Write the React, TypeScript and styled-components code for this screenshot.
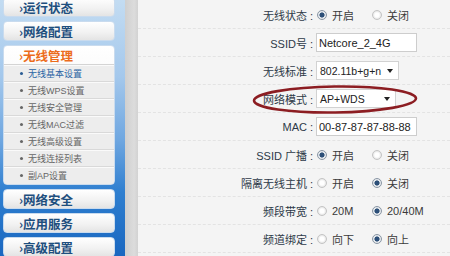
import styled, { createGlobalStyle } from "styled-components";

const GlobalStyle = createGlobalStyle`
  html, body {
    margin: 0;
    padding: 0;
  }
  body {
    width: 450px;
    height: 256px;
    overflow: hidden;
    background: #f4f4f4;
    font-family: "Liberation Sans", "Noto Sans CJK SC", sans-serif;
  }
`;

const Page = styled.div`
  display: flex;
  width: 450px;
  height: 256px;
  overflow: hidden;
`;

const Sidebar = styled.nav`
  width: 125px;
  flex-shrink: 0;
  overflow: hidden;
  background: linear-gradient(
    180deg,
    #c3dcf2 0%,
    #a4c8ec 30%,
    #6ea6e0 55%,
    #2f7fd0 75%,
    #1a67c0 100%
  );
`;

const Menu = styled.div`
  display: flex;
  flex-direction: column;
  gap: 4px;
  margin: -3px 10px 0 3px;
`;

const MenuBox = styled.div`
  border: 1px solid #c9dbee;
  border-radius: 4px;
  background: linear-gradient(180deg, #ffffff 0%, #f1f1f1 60%, #e4e4e4 100%);
  overflow: hidden;
`;

const MenuHead = styled.div<{ $active?: boolean }>`
  height: 18px;
  display: flex;
  align-items: center;
  padding-left: 15px;
  font-family: "Noto Sans CJK SC", sans-serif;
  font-size: 12.5px;
  line-height: 13px;
  font-weight: 700;
  color: ${({ $active }) => ($active ? "#ec6c1c" : "#1e4f7e")};
  border-bottom: ${({ $active }) => ($active ? "1px solid #d4d4d4" : "none")};
`;

const SubList = styled.ul`
  list-style: none;
  margin: 0;
  padding: 0;
  background: #ededed;
`;

const SubItem = styled.li<{ $current?: boolean }>`
  height: 17px;
  box-sizing: border-box;
  display: flex;
  align-items: center;
  gap: 5px;
  padding-left: 16px;
  font-family: "Liberation Sans", "Noto Sans CJK SC", sans-serif;
  font-size: 9px;
  color: ${({ $current }) => ($current ? "#2a64a4" : "#666")};
  border-bottom: 1px solid #d9d9d9;
  box-shadow: inset 0 1px 0 #fafafa;
  &:last-child {
    border-bottom: none;
  }
`;

const Bullet = styled.span<{ $current?: boolean }>`
  width: 3px;
  height: 3px;
  border-radius: 50%;
  background: ${({ $current }) => ($current ? "#2a5c94" : "#666")};
`;

const Divider = styled.div`
  width: 13px;
  flex-shrink: 0;
  background: linear-gradient(90deg, #cfcfcf, #dcdcdc 70%, #d2d2d2);
`;

const Content = styled.main`
  position: relative;
  flex: 1;
  padding-top: 1px;
  background: #f4f4f4;
`;

const Row = styled.div`
  display: grid;
  grid-template-columns: 178px 1fr;
  align-items: center;
  height: 28px;
  box-sizing: border-box;
  border-bottom: 1px dashed #e3e3e3;
`;

const Label = styled.div`
  text-align: right;
  white-space: nowrap;
  font-size: 11px;
  color: #2e3a48;
`;

const Colon = styled.span`
  padding: 0 3px 0 3px;
  font-family: "Liberation Sans", sans-serif;
`;

const Value = styled.div`
  display: flex;
  align-items: center;
  font-size: 11px;
  color: #333;
`;

const Option = styled.label`
  width: 55px;
  display: flex;
  align-items: center;
  gap: 5px;
  font-size: 11px;
  color: #3a3a3a;
  white-space: nowrap;
`;

const Radio = styled.span<{ $checked?: boolean }>`
  width: 8px;
  height: 8px;
  border-radius: 50%;
  border: 1px solid ${({ $checked }) => ($checked ? "#8a96a4" : "#c4c4c4")};
  background: ${({ $checked }) =>
    $checked
      ? "radial-gradient(circle, #2c4f78 0 2.3px, #e4e8ec 2.8px)"
      : "radial-gradient(circle, #ffffff 0 2px, #e6e6e6 4px)"};
  margin-left: 1px;
`;

const TextBox = styled.div`
  width: 101px;
  height: 19px;
  box-sizing: border-box;
  display: flex;
  align-items: center;
  padding-left: 2px;
  background: #fff;
  border: 1px solid #cdcdcd;
  font-size: 11px;
  color: #222;
`;

const Select = styled.div<{ $w: number }>`
  width: ${({ $w }) => $w}px;
  height: 19px;
  box-sizing: border-box;
  display: flex;
  align-items: center;
  justify-content: space-between;
  padding: 0 5px 0 3px;
  background: #fff;
  border: 1px solid #d2d2d2;
  font-size: 10.5px;
  color: #222;
`;

const Caret = styled.span`
  width: 0;
  height: 0;
  border-left: 3px solid transparent;
  border-right: 3px solid transparent;
  border-top: 4px solid #222;
`;

const Ring = styled.svg`
  position: absolute;
  left: 113px;
  top: 84px;
  pointer-events: none;
`;

type Choice = { text: string; checked?: boolean };

const RadioPair = ({ items }: { items: Choice[] }) => (
  <Value>
    {items.map((c) => (
      <Option key={c.text}>
        <Radio $checked={c.checked} />
        {c.text}
      </Option>
    ))}
  </Value>
);

const subItems = [
  "无线基本设置",
  "无线WPS设置",
  "无线安全管理",
  "无线MAC过滤",
  "无线高级设置",
  "无线连接列表",
  "副AP设置",
];

const Field = ({ label, children }: { label: string; children: React.ReactNode }) => (
  <Row>
    <Label>
      {label}
      <Colon>:</Colon>
    </Label>
    {children}
  </Row>
);

export default function App() {
  return (
    <Page>
      <GlobalStyle />
      <Sidebar>
        <Menu>
          <MenuBox>
            <MenuHead>›运行状态</MenuHead>
          </MenuBox>
          <MenuBox>
            <MenuHead>›网络配置</MenuHead>
          </MenuBox>
          <MenuBox>
            <MenuHead $active>›无线管理</MenuHead>
            <SubList>
              {subItems.map((s, i) => (
                <SubItem key={s} $current={i === 0}>
                  <Bullet $current={i === 0} />
                  {s}
                </SubItem>
              ))}
            </SubList>
          </MenuBox>
          <MenuBox>
            <MenuHead>›网络安全</MenuHead>
          </MenuBox>
          <MenuBox>
            <MenuHead>›应用服务</MenuHead>
          </MenuBox>
          <MenuBox>
            <MenuHead>›高级配置</MenuHead>
          </MenuBox>
        </Menu>
      </Sidebar>
      <Divider />
      <Content>
        <Field label="无线状态">
          <RadioPair items={[{ text: "开启", checked: true }, { text: "关闭" }]} />
        </Field>
        <Field label="SSID号">
          <Value>
            <TextBox>Netcore_2_4G</TextBox>
          </Value>
        </Field>
        <Field label="无线标准">
          <Value>
            <Select $w={83}>
              802.11b+g+n
              <Caret />
            </Select>
          </Value>
        </Field>
        <Field label="网络模式">
          <Value>
            <Select $w={80}>
              AP+WDS
              <Caret />
            </Select>
          </Value>
        </Field>
        <Field label="MAC">
          <Value>
            <TextBox>00-87-87-87-88-88</TextBox>
          </Value>
        </Field>
        <Field label="SSID 广播">
          <RadioPair items={[{ text: "开启", checked: true }, { text: "关闭" }]} />
        </Field>
        <Field label="隔离无线主机">
          <RadioPair items={[{ text: "开启" }, { text: "关闭", checked: true }]} />
        </Field>
        <Field label="频段带宽">
          <RadioPair items={[{ text: "20M" }, { text: "20/40M", checked: true }]} />
        </Field>
        <Field label="频道绑定">
          <RadioPair items={[{ text: "向下" }, { text: "向上", checked: true }]} />
        </Field>
        <Ring width="168" height="32" viewBox="0 0 168 32">
          <ellipse
            cx="84"
            cy="15.5"
            rx="81"
            ry="13"
            fill="none"
            stroke="#8c1d22"
            strokeWidth="2.6"
            transform="rotate(-0.8 84 15.5)"
          />
        </Ring>
      </Content>
    </Page>
  );
}
